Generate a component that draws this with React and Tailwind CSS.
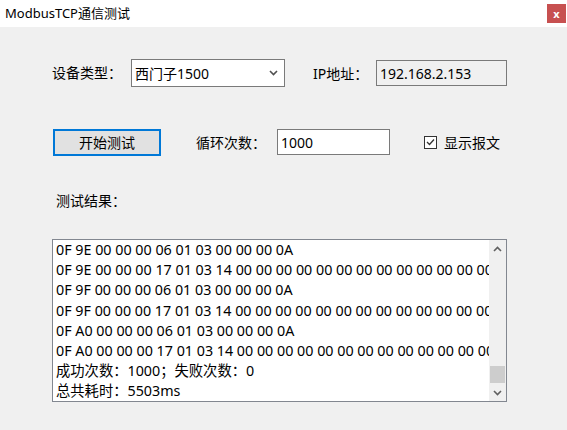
import React from 'react';

const lines = [
  '0F 9E 00 00 00 06 01 03 00 00 00 0A',
  '0F 9E 00 00 00 17 01 03 14 00 00 00 00 00 00 00 00 00 00 00 00 00 00 00 00 00 00',
  '0F 9F 00 00 00 06 01 03 00 00 00 0A',
  '0F 9F 00 00 00 17 01 03 14 00 00 00 00 00 00 00 00 00 00 00 00 00 00 00 00 00 00',
  '0F A0 00 00 00 06 01 03 00 00 00 0A',
  '0F A0 00 00 00 17 01 03 14 00 00 00 00 00 00 00 00 00 00 00 00 00 00 00 00 00 00',
  '成功次数：1000；失败次数：0',
  '总共耗时：5503ms',
];

function Chevron({ up, className }) {
  return (
    <svg width="9" height="6" viewBox="0 0 9 6" className={className}>
      <path
        d={up ? 'M1 5 L4.5 1.5 L8 5' : 'M1 1 L4.5 4.5 L8 1'}
        fill="none"
        stroke="currentColor"
        strokeWidth="1.6"
      />
    </svg>
  );
}

export default function App() {
  return (
    <div
      className="w-[567px] h-[430px] bg-[#f0f0f0] text-[14px] text-black overflow-hidden"
      style={{ fontFamily: '"Noto Sans", "Noto Sans CJK SC", sans-serif' }}
    >
      {/* title bar */}
      <div className="h-[27px] bg-white flex items-start justify-between">
        <span className="pl-[5px] pt-[3px] text-[13px] leading-[20px]">ModbusTCP通信测试</span>
        <button className="mt-[4px] mr-[1px] w-[19px] h-[19px] bg-[#c75050] text-white text-[11px] font-bold leading-[19px] flex items-center justify-center">
          x
        </button>
      </div>

      {/* row 1 */}
      <div className="flex items-center mt-[32px] h-[28px]">
        <span className="ml-[52px] w-[79px] leading-[20px]">设备类型：</span>
        <div className="w-[154px] h-[28px] bg-white border border-[#7a7a7a] flex items-center justify-between pl-[3px] pr-[6px]">
          <span>西门子1500</span>
          <Chevron className="text-[#505050]" />
        </div>
        <span className="ml-[28px] w-[63px]">IP地址：</span>
        <div className="w-[131px] h-[26px] border border-[#7a7a7a] bg-[#f0f0f0] flex items-center pl-[3px]">
          192.168.2.153
        </div>
      </div>

      {/* row 2 */}
      <div className="flex items-center mt-[41px] h-[28px]">
        <button className="ml-[53px] w-[108px] h-[27px] border-2 border-[#0078d7] bg-[#e1e1e1] flex items-center justify-center">
          开始测试
        </button>
        <span className="ml-[35px] w-[81px]">循环次数：</span>
        <div className="w-[113px] h-[26px] bg-white border border-[#7a7a7a] flex items-center pl-[3px]">
          1000
        </div>
        <div className="ml-[34px] w-[13px] h-[13px] border border-[#333333] bg-white flex items-center justify-center">
          <svg width="9" height="8" viewBox="0 0 9 8">
            <path d="M1 4 L3.5 6.5 L8 1.5" fill="none" stroke="#333" strokeWidth="1.3" />
          </svg>
        </div>
        <span className="ml-[7px]">显示报文</span>
      </div>

      {/* result label */}
      <div className="mt-[35px] ml-[56px] leading-[20px]">测试结果：</div>

      {/* result box */}
      <div className="mt-[28px] ml-[52px] w-[455px] h-[163px] bg-white border border-[#828790] flex">
        <div className="flex-1 overflow-hidden pt-[0px] pl-[3px] text-[14.3px]">
          {lines.map((l, i) => (
            <div key={i} className="whitespace-nowrap leading-[20.2px]">
              {l}
            </div>
          ))}
        </div>
        <div className="w-[17px] bg-[#f0f0f0] flex flex-col items-center justify-between">
          <div className="h-[17px] flex items-center justify-center text-[#606060]">
            <Chevron up />
          </div>
          <div className="flex-1 w-full flex flex-col justify-end">
            <div className="h-[17px] mx-[1px] bg-[#cdcdcd] mb-[1px]" />
          </div>
          <div className="h-[17px] flex items-center justify-center text-[#606060]">
            <Chevron />
          </div>
        </div>
      </div>
    </div>
  );
}
